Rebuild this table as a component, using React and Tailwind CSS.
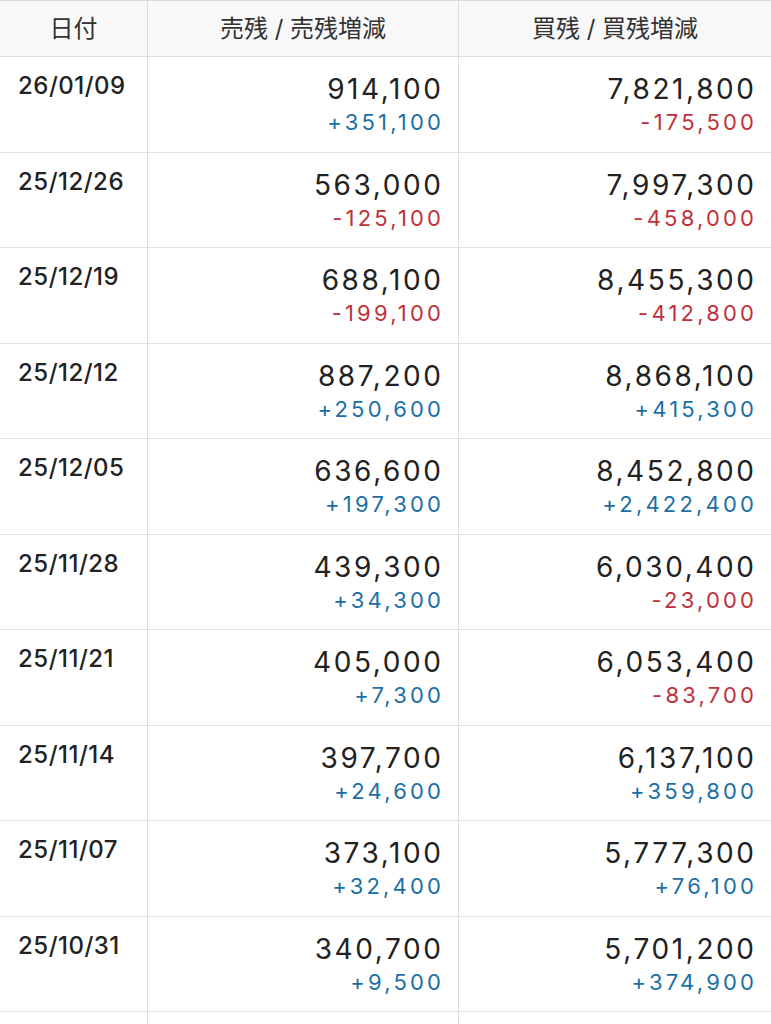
import React from "react";

const rows = [
  ["26/01/09", "914,100", "+351,100", "7,821,800", "-175,500"],
  ["25/12/26", "563,000", "-125,100", "7,997,300", "-458,000"],
  ["25/12/19", "688,100", "-199,100", "8,455,300", "-412,800"],
  ["25/12/12", "887,200", "+250,600", "8,868,100", "+415,300"],
  ["25/12/05", "636,600", "+197,300", "8,452,800", "+2,422,400"],
  ["25/11/28", "439,300", "+34,300", "6,030,400", "-23,000"],
  ["25/11/21", "405,000", "+7,300", "6,053,400", "-83,700"],
  ["25/11/14", "397,700", "+24,600", "6,137,100", "+359,800"],
  ["25/11/07", "373,100", "+32,400", "5,777,300", "+76,100"],
  ["25/10/31", "340,700", "+9,500", "5,701,200", "+374,900"],
];

function Val({ main, diff }) {
  const neg = diff.startsWith("-");
  return (
    <div className="flex flex-col items-end pr-[17px] pt-[16px]">
      <div className="text-[28px] leading-[32px] text-[#222] tracking-[2.6px] mr-[-2.6px]">{main}</div>
      <div
        className={
          "mt-[4px] text-[22px] leading-[26px] tracking-[3.2px] mr-[-3.2px] " +
          (neg ? "text-[#c0303a]" : "text-[#1a6fa6]")
        }
      >
        {diff}
      </div>
    </div>
  );
}

export default function App() {
  return (
    <div className="w-[771px] h-[1024px] overflow-hidden bg-white font-['Inter','Noto_Sans_CJK_JP',sans-serif]">
      <div className="flex h-[57px] bg-[#f8f8f8] border-t border-b border-[#dcdcdc] text-[#333] text-[24px]">
        <div className="w-[148px] shrink-0 border-r border-[#dcdcdc] flex items-center justify-center">
          日付
        </div>
        <div className="w-[311px] shrink-0 border-r border-[#dcdcdc] flex items-center justify-center">
          売残 / 売残増減
        </div>
        <div className="flex-1 flex items-center justify-center">買残 / 買残増減</div>
      </div>
      {rows.map((r, i) => (
        <div key={i} className="flex h-[95.5px] border-b border-[#e2e2e2]">
          <div className="w-[148px] shrink-0 border-r border-[#dcdcdc] pl-[18px] pt-[14px]">
            <div className="text-[24px] leading-[30px] text-[#222] tracking-[0.5px] font-medium">{r[0]}</div>
          </div>
          <div className="w-[311px] shrink-0 border-r border-[#dcdcdc]">
            <Val main={r[1]} diff={r[2]} />
          </div>
          <div className="flex-1">
            <Val main={r[3]} diff={r[4]} />
          </div>
        </div>
      ))}
      <div className="flex h-[40px]">
        <div className="w-[148px] shrink-0 border-r border-[#dcdcdc]" />
        <div className="w-[311px] shrink-0 border-r border-[#dcdcdc]" />
        <div className="flex-1" />
      </div>
    </div>
  );
}
